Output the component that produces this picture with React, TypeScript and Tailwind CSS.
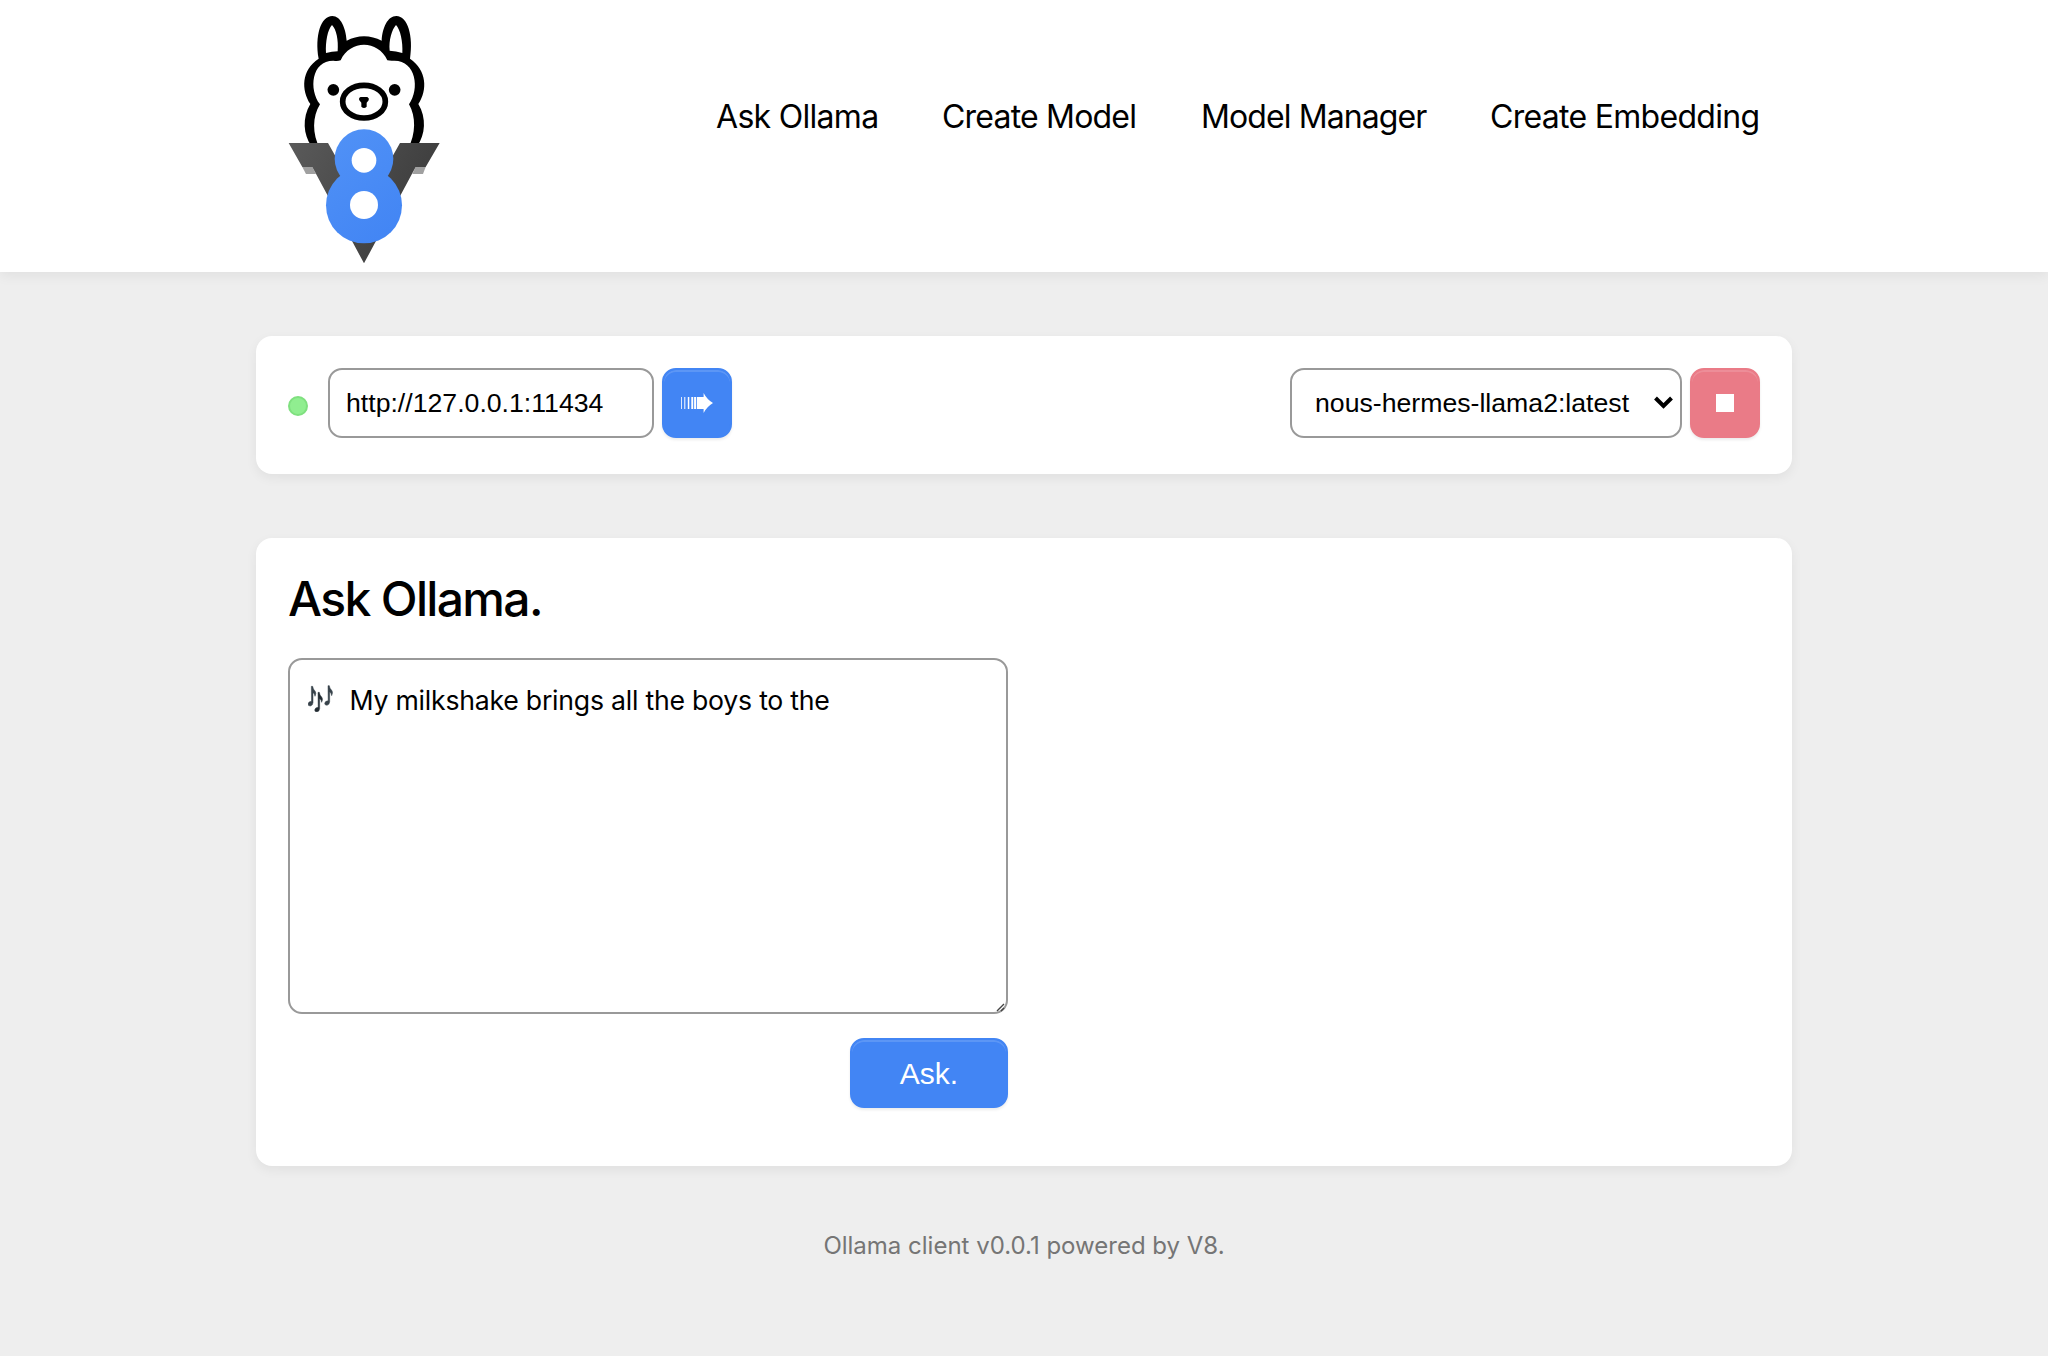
import React from "react";

function Logo() {
  return (
    <svg className="block h-[272px] w-[152px] shrink-0" viewBox="54 0 456 816">
      <defs>
        <linearGradient id="vee" x1="0" y1="0" x2="1" y2="0.4">
          <stop offset="0" stopColor="#5a5a5a" />
          <stop offset="1" stopColor="#3c3c3c" />
        </linearGradient>
        <linearGradient id="eight" gradientUnits="userSpaceOnUse" x1="170" y1="420" x2="390" y2="700">
          <stop offset="0" stopColor="#5091f6" />
          <stop offset="1" stopColor="#4285f4" />
        </linearGradient>
      </defs>
      <path d="M124 438C100 404 96 354 121 312C94 270 93 210 146 176C134 108 152 48 187 48C212 48 227 83 230 122C262 104 302 104 335 122C337 83 353 48 379 48C413 48 431 108 420 176C471 210 473 270 445 312C470 354 466 404 442 438Z" fill="#000" />
      <path d="M168 159C166 126 173 88 186 75C199 88 206 120 203 154Q186 154 168 159Z" fill="#fff" />
      <path d="M397 159C399 126 391 88 378 75C366 88 356 120 359 152Q378 153 397 159Z" fill="#fff" />
      <path d="M150 446C126 402 127 350 150 313C116 268 124 182 190 182Q203 184 212 181C240 119 324 119 352 181Q361 183 372 182C438 181 450 266 417 313C438 350 438 402 414 446Z" fill="#fff" />
      <circle cx="190" cy="269.500" r="17.500" />
      <circle cx="374" cy="269.500" r="17.500" />
      <ellipse cx="282" cy="305" rx="64" ry="49" fill="#fff" stroke="#000" strokeWidth="17" />
      <path d="M272 291H292Q299 295 296 301L290 308V320Q282 328 274 320V308L268 301Q265 294 272 291Z" />
      <path d="M97 501H127L138 522H108Z" fill="#a0a0a0" />
      <path d="M467 501H437L427 522H459Z" fill="#a0a0a0" />
      <path d="M56 429H174L282 620L390 429H509L467 501H437L282 790L127 501H97Z" fill="url(#vee)" />
      <circle cx="282" cy="476" r="88" fill="url(#eight)" />
      <circle cx="282" cy="616" r="114" fill="url(#eight)" />
      <circle cx="282" cy="481" r="37" fill="#fff" />
      <circle cx="282" cy="615" r="42" fill="#fff" />
    </svg>
  );
}

function ArrowIcon() {
  return (
    <svg className="mb-px h-5 w-8" viewBox="0 0 32 20" fill="#fff">
      <path d="M0 4h.8v12H0zM3.300 4h1v12h-1zM6.800 4h1.500v12H6.800zM10.300 4h1.900v12h-1.900zM13.100 4h1.900v12h-1.900zM15.800 4h6.800V0Q26 6.500 32 10Q26 13.500 22.600 20v-4h-6.800z" />
    </svg>
  );
}

const noteShape = "M28 18L32 18Q33 27 39 32Q44 38 39 48Q38 39 33 37V67Q32 76 25 77Q18 77 18 71Q19 64 28.500 63Z";

function NotesIcon() {
  return (
    <svg className="mt-[5px] h-[27px] w-[27px] shrink-0" viewBox="18 14 81 81" fill="#37424a" stroke="#37424a" strokeWidth="1.500">
      <path d={noteShape} />
      <path d={noteShape} transform="translate(20 18)" fill="#222a30" />
      <path d={noteShape} transform="translate(50 -2)" />
    </svg>
  );
}

const buttonShade = "shadow-[inset_0_2px_0_rgba(255,255,255,0.14),0_2px_3px_rgba(0,0,0,0.08)]";
const cardShade = "rounded-2xl bg-white shadow-[0_4px_12px_rgba(0,0,0,0.06)]";

export default function App() {
  return (
    <div className="min-h-[1356px] bg-[#eee] font-['Inter',sans-serif] text-black">
      <header className="h-[272px] bg-white shadow-[0_4px_12px_rgba(0,0,0,0.06)]">
        <div className="mx-auto flex w-[1472px] justify-between">
          <Logo />
          <nav className="flex gap-16 pt-[93px] text-[32px] leading-[48px] whitespace-nowrap">
            <a className="w-[162px] tracking-[-0.7px]">Ask Ollama</a>
            <a className="w-[195px] tracking-[-0.8px]">Create Model</a>
            <a className="w-[225px] tracking-[-0.9px]">Model Manager</a>
            <a className="w-[270px] tracking-[-0.7px]">Create Embedding</a>
          </nav>
        </div>
      </header>
      <main className="mx-auto flex w-[1536px] flex-col gap-16 pt-16">
        <section className={"flex h-[138px] justify-between p-8 " + cardShade}>
          <div className="flex">
            <span className="mt-7 mr-5 size-5 rounded-full border-2 border-[#7fe07f] bg-[#90ee90]" />
            <input
              className="h-[70px] w-[326px] rounded-[14px] border-2 border-[#999] bg-white px-4 font-['Liberation_Sans',sans-serif] text-[26.667px]"
              defaultValue="http://127.0.0.1:11434"
            />
            <button className={"ml-2 flex size-[70px] items-center justify-center rounded-[14px] border-2 border-[#4285f4] bg-[#4285f4] " + buttonShade}>
              <ArrowIcon />
            </button>
          </div>
          <div className="flex">
            <div className="flex h-[70px] w-[392px] items-center justify-between rounded-[14px] border-2 border-[#999] pr-[7px] pl-[23px] font-['Liberation_Sans',sans-serif] text-[26.667px]">
              <span>nous-hermes-llama2:latest</span>
              <svg className="mb-px h-[13px] w-[19px]" viewBox="0 0 19 13" fill="none" stroke="#000" strokeWidth="4">
                <path d="M1.500 2L9.500 10L17.500 2" />
              </svg>
            </div>
            <button className={"ml-2 flex size-[70px] items-center justify-center rounded-[14px] border-2 border-[#ea7b87] bg-[#ea7b87] " + buttonShade}>
              <span className="size-[18px] bg-white" />
            </button>
          </div>
        </section>
        <section className={"h-[628px] p-8 " + cardShade}>
          <h1 className="h-[58px] text-[48px] leading-[58px] font-medium tracking-[-1.65px]">Ask Ollama.</h1>
          <div className="mt-[30px] flex w-[720px] flex-col items-end gap-6">
            <div className="relative flex h-[356px] w-full rounded-[14px] border-2 border-[#999] bg-white pt-5 pl-[18px] text-[26.667px] leading-[40px]">
              <NotesIcon />
              <span className="ml-[14.5px] tracking-[-0.24px] whitespace-nowrap">My milkshake brings all the boys to the</span>
              <svg className="absolute right-px bottom-0 size-[9px]" viewBox="0 0 9 9" stroke="#444" strokeWidth="1.400">
                <path d="M1 8L8 1M5 8L8 5" />
              </svg>
            </div>
            <button className={"h-[70px] w-[158px] rounded-[14px] border-2 border-[#4285f4] bg-[#4285f4] pt-px font-['Liberation_Sans',sans-serif] text-[30px] text-white " + buttonShade}>
              Ask.
            </button>
          </div>
        </section>
      </main>
      <footer className="pt-[62px] text-center text-2xl leading-9 text-[#757575]">Ollama client v0.0.1 powered by V8.</footer>
    </div>
  );
}
